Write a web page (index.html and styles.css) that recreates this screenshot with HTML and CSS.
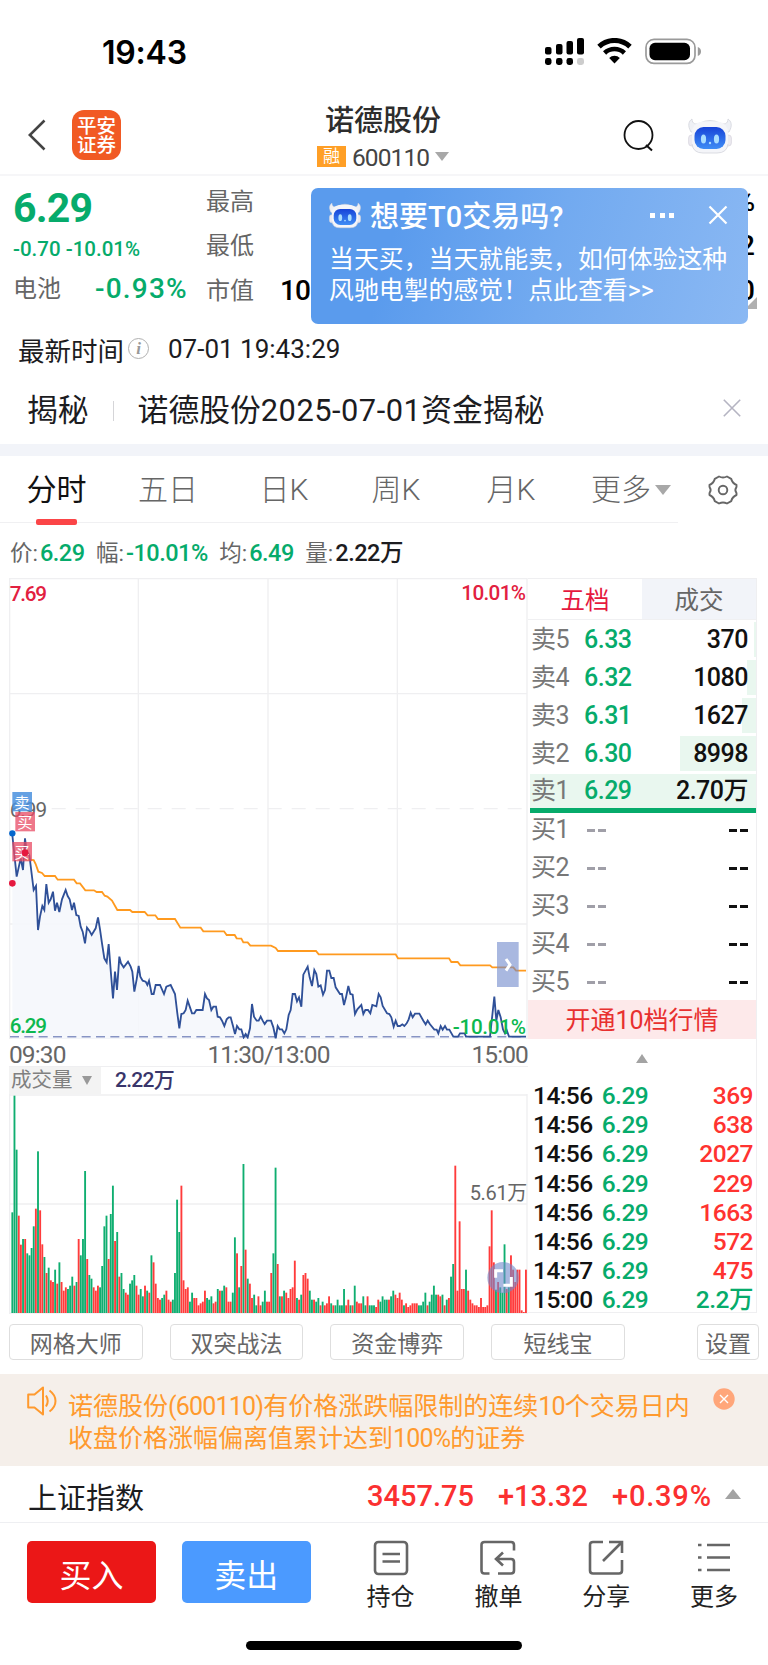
FILE: index.html
```html
<!DOCTYPE html>
<html lang="zh-CN">
<head>
  <meta charset="UTF-8" />
  <meta name="viewport" content="width=device-width, initial-scale=1" />
  <title>诺德股份 600110</title>
  <link rel="stylesheet" href="styles.css">
</head>
<body>
  <svg class="defs" width="0" height="0">
    <defs>
      <linearGradient id="face" x1="0" y1="0" x2="0" y2="1">
        <stop offset="0" stop-color="#1743d8" />
        <stop offset="1" stop-color="#3f8df5" />
      </linearGradient>
      <symbol id="robot" viewBox="0 0 44 36">
        <path d="M3 14 C-1 7 1 3 4 1 C4 6 8 7 12 5 Q22 0 32 5 C36 7 40 6 40 1 C43 3 45 7 41 14Z" fill="#eef0f5" stroke="#d3d4dc" stroke-width=".8" />
        <rect x=".6" y="17" width="7" height="11" rx="3" fill="#eceaf0" stroke="#d5d3dc" stroke-width=".7" />
        <rect x="36.4" y="17" width="7" height="11" rx="3" fill="#eceaf0" stroke="#d5d3dc" stroke-width=".7" />
        <path d="M14 3.500 H30 Q40 5 40 15 V24 Q40 35 29 35 H15 Q4 35 4 24 V15 Q4 5 14 3.500Z" fill="#f4f5f9" />
        <path d="M4 26 Q5 35 15 35 H29 Q39 35 40 26" fill="none" stroke="#d3d4dc" stroke-width=".8" />
        <rect x="6.500" y="9" width="31" height="22" rx="9" fill="url(#face)" />
        <ellipse cx="15.500" cy="21" rx="2.600" ry="4.600" fill="#a8dcff" />
        <ellipse cx="28.500" cy="21" rx="2.600" ry="4.600" fill="#a8dcff" />
        <circle cx="22" cy="25" r="1.200" fill="#a8dcff" />
      </symbol>
    </defs>
  </svg>

  <div class="status-bar">
    <span class="clock">19:43</span>
    <div class="status-icons">
      <svg class="signal" width="39" height="27" viewBox="0 0 39 27">
        <rect x="0" y="9" width="6.5" height="7.5" rx="2" />
        <rect x="11" y="6" width="6.5" height="10.5" rx="2" />
        <rect x="21.5" y="3" width="6.5" height="13.5" rx="2" />
        <rect x="32" y="0" width="7" height="16.5" rx="2" />
        <rect x="0" y="20" width="6.5" height="7" rx="2.4" />
        <rect x="11" y="20" width="6.5" height="7" rx="2.4" />
        <rect x="21.5" y="20" width="6.5" height="7" rx="2.4" />
        <rect x="32" y="20" width="7" height="7" rx="2.4" fill="#ccc" />
      </svg>
      <svg class="wifi" width="35" height="26" viewBox="0 0 35 26">
        <path d="M2 8.6 A22.5 22.5 0 0 1 33 8.6" fill="none" stroke="#000" stroke-width="5" />
        <path d="M7.6 15 A14.4 14.4 0 0 1 27.4 15" fill="none" stroke="#000" stroke-width="4.6" />
        <path d="M17.5 25.4 L12.2 20 A7.6 7.6 0 0 1 22.8 20Z" />
      </svg>
      <svg class="battery" width="57" height="27" viewBox="0 0 57 27">
        <rect x="1" y="1.4" width="49" height="24" rx="8" fill="none" stroke="#9a9a9a" stroke-width="1.7" />
        <rect x="4.5" y="4.8" width="40.5" height="17.4" rx="5.5" />
        <path d="M52.8 9 Q56 10.5 56 13.4 Q56 16.4 52.8 18Z" fill="#9a9a9a" />
      </svg>
    </div>
  </div>

  <header class="header">
    <svg class="back" width="18" height="32" viewBox="0 0 18 32">
      <path d="M16.5 1.5 L1.8 16 L16.5 30.5" fill="none" stroke="#444" stroke-width="2.6" />
    </svg>
    <div class="logo"><span>平安</span><span>证券</span></div>
    <div class="title">
      <div class="stock-name">诺德股份</div>
      <div class="stock-code"><span class="badge">融</span><span class="code">600110</span><i class="tri-down"></i></div>
    </div>
    <svg class="search" width="32" height="34" viewBox="0 0 32 34">
      <circle cx="15.5" cy="16" r="14" fill="none" stroke="#111" stroke-width="1.8" />
      <path d="M23 26 L29 31.5" stroke="#111" stroke-width="2" />
    </svg>
    <svg class="robot" width="44" height="36"><use href="#robot" /></svg>
  </header>

  <section class="quote">
    <div class="quote-left">
      <div class="price">6.29</div>
      <div class="change">-0.70 -10.01%</div>
      <div class="sector"><span>电池</span><b>-0.93%</b></div>
    </div>
    <div class="quote-right">
      <div class="stat"><span>最高</span><em>%</em></div>
      <div class="stat"><span>最低</span><em>2</em></div>
      <div class="stat"><span>市值</span><strong>10</strong><em>0</em></div>
      <i class="corner"></i>
    </div>
    <div class="popup">
      <div class="popup-head">
        <svg width="32" height="27" viewBox="0 0 44 36"><use href="#robot" /></svg>
        <span class="popup-title">想要T0交易吗?</span>
        <i class="dots"></i>
        <svg class="popup-close" width="20" height="20" viewBox="0 0 20 20"><path d="M1.5 1.5 L18.5 18.5 M18.5 1.5 L1.5 18.5" stroke="#fff" stroke-width="2.2" /></svg>
      </div>
      <p>当天买，当天就能卖，如何体验这种<br>风驰电掣的感觉！点此查看&gt;&gt;</p>
    </div>
  </section>

  <div class="latest">
    <span class="latest-label">最新时间</span>
    <i class="info">i</i>
    <span class="latest-time">07-01 19:43:29</span>
  </div>

  <div class="secret">
    <span>揭秘</span>
    <i class="bar"></i>
    <span class="secret-text">诺德股份<span class="date">2025-07-01</span>资金揭秘</span>
    <svg class="secret-close" width="18" height="18" viewBox="0 0 18 18"><path d="M.8 .8 L17.2 17.2 M17.2 .8 L.8 17.2" stroke="#b5b4c2" stroke-width="1.6" /></svg>
  </div>

  <nav class="tabs">
    <span class="tab active">分时</span>
    <span class="tab">五日</span>
    <span class="tab">日K</span>
    <span class="tab">周K</span>
    <span class="tab">月K</span>
    <span class="tab more">更多<i class="tri-down"></i></span>
    <svg class="gear" width="30" height="30" viewBox="0 0 30 30" fill="none" stroke="#666" stroke-width="1.9">
      <path d="M11 1.5 Q15 3.5 19 1.5 L23.2 3.8 Q24.2 8.2 28.5 10 V12 Q26.2 15 28.5 18 V20 Q24.2 21.8 23.2 26.2 L19 28.5 Q15 26.5 11 28.5 L6.8 26.2 Q5.8 21.8 1.5 20 V18 Q3.8 15 1.5 12 V10 Q5.8 8.2 6.8 3.8Z" stroke-linejoin="round" />
      <circle cx="15" cy="15" r="4.3" />
    </svg>
  </nav>

  <div class="summary">
    <span class="s-price">价:<b class="green">6.29</b></span>
    <span class="s-range">幅:<b class="green">-10.01%</b></span>
    <span class="s-avg">均:<b class="green">6.49</b></span>
    <span class="s-vol">量:<b>2.22万</b></span>
  </div>

  <main class="board">
    <div class="charts">
      <svg class="price-chart" width="519" height="461" viewBox="0 0 1557 1383">
        <g stroke="#efeff1" stroke-width="4" fill="none">
          <path d="M2 0 V1383 M388 0 V1383 M777 0 V1383 M1165 0 V1383 M1554 0 V1383 M0 2 H1554 M0 347 H1554 M0 1038 H1554 M0 1381 H1554" />
          <path d="M128 692 H1554" stroke-dasharray="42 30" />
        </g>
        <g transform="translate(-27 606)">
          <path id="area" fill="#f5f7fb" fill-opacity=".85" />
          <polyline id="avg" fill="none" stroke="#ff9a1f" stroke-width="5.5" points="75,238 101,240 107,252 115,275 126,279 134,288 165,288 173,299 222,299 230,310 240,310 256,331 282,331 290,336 306,336 314,347 322,350 336,362 352,390 390,390 397,396 434,396 443,406 466,406 474,417 525,417 541,443 602,443 610,454 672,454 680,465 704,465 710,475 724,476 730,487 743,487 751,497 813,497 827,504 834,513 948,513 956,523 1187,523 1194,535 1347,535 1354,546 1373,546 1381,556 1470,556 1477,562 1540,562 1548,572 1578,572" />
          <path d="M30 770 H1578" stroke="#8794c4" stroke-width="4.5" stroke-dasharray="27 16" />
          <polyline id="line" fill="none" stroke="#2f5098" stroke-width="5.5" points="37,165 50,290 62,235 69,270 75,175 80,215 88,225 101,330 108,318 114,450 120,410 127,378 133,390 139,312 146,368 152,358 159,335 165,392 171,368 178,396 186,358 197,330 203,348 209,358 216,390 222,368 229,405 236,408 242,440 248,455 255,490 261,443 268,452 275,465 287,445 294,412 300,448 306,490 313,535 320,547 326,492 332,570 339,655 345,575 351,630 358,530 363,550 371,562 384,545 392,560 397,575 403,635 410,598 416,558 421,590 428,602 437,605 442,615 447,602 455,642 461,642 467,615 480,615 492,642 499,620 512,615 525,642 532,700 538,745 544,702 551,700 557,690 563,662 570,682 576,700 583,700 589,690 608,690 615,642 621,655 627,660 634,690 640,680 648,680 653,710 660,712 666,722 673,738 680,718 686,712 692,712 699,738 705,762 711,738 718,748 724,748 731,772 737,762 743,772 750,745 756,672 762,710 770,722 776,722 782,710 788,722 794,732 801,722 813,722 820,742 827,775 833,738 839,748 846,748 853,760 859,748 866,705 872,690 878,642 885,642 891,664 897,652 904,680 910,584 923,560 929,592 936,618 943,570 949,582 955,620 962,616 969,644 975,630 981,572 988,572 994,594 1001,594 1007,622 1020,642 1026,642 1032,675 1038,652 1045,618 1051,642 1058,644 1065,702 1072,688 1084,675 1090,702 1096,690 1104,690 1111,700 1117,675 1129,679 1136,642 1142,652 1148,678 1161,700 1168,702 1174,712 1181,740 1187,722 1193,738 1200,738 1207,733 1213,738 1220,730 1226,718 1232,698 1238,712 1245,701 1258,701 1270,722 1277,733 1283,722 1290,733 1303,749 1310,749 1315,760 1322,738 1328,749 1335,738 1341,749 1348,749 1360,770 1374,770 1380,760 1394,760 1398,770 1470,770 1477,705 1483,650 1489,722 1495,690 1502,712 1509,748 1515,760 1520,750 1527,770 1578,770" />
        </g>
        <g class="chart-text">
          <text x="2" y="69" class="up" textLength="112">7.69</text>
          <text x="1551" y="65" class="up" text-anchor="end" textLength="194">10.01%</text>
          <text x="2" y="716" class="flat" textLength="112">6.99</text>
          <text x="2" y="1364" class="down" textLength="112">6.29</text>
          <text x="1551" y="1369" class="down" text-anchor="end" textLength="220">-10.01%</text>
        </g>
        <g class="marks">
          <rect x="10" y="642" width="59" height="58" fill="#4a90de" fill-opacity=".85" />
          <text x="39" y="689">卖</text>
          <rect x="19" y="702" width="59" height="58" fill="#e84a63" fill-opacity=".75" />
          <text x="48" y="749">买</text>
          <rect x="10" y="792" width="59" height="58" fill="#e84a63" fill-opacity=".75" />
          <text x="39" y="839">买</text>
          <circle cx="10" cy="766" r="9.5" fill="#0566cc" />
          <circle cx="48" cy="824" r="10" fill="#e5193f" />
          <circle cx="10" cy="916" r="10" fill="#e5193f" />
        </g>
        <rect x="1464" y="1092" width="65" height="135" fill="#6f88cc" fill-opacity=".6" />
        <path d="M1491 1143 L1503 1160 L1491 1178" fill="none" stroke="#fff" stroke-width="9" />
      </svg>
      <div class="axis"><span>09:30</span><span>11:30/13:00</span><span>15:00</span></div>
      <div class="vol-head">
        <span class="vol-name">成交量<i class="tri-down"></i></span>
        <span class="vol-value">2.22万</span>
      </div>
      <svg class="vol-chart" width="519" height="220" viewBox="0 0 1557 660">
        <path d="M2 0 V660 M1554 0 V660 M0 3 H1554 M0 330 H1554 M0 657 H1554" stroke="#efeff1" stroke-width="4" />
        <g id="bars"></g>
        <text x="1554" y="318" text-anchor="end" class="vol-text">5.61万</text>
        <circle cx="1482" cy="551" r="47" fill="#6f88cc" fill-opacity=".6" />
        <path d="M1460 551 V530 H1482 M1507 549 V574 H1483" fill="none" stroke="#fff" stroke-width="9" />
      </svg>
    </div>

    <aside class="depth">
      <div class="depth-tabs"><span class="on">五档</span><span>成交</span></div>
      <div class="levels sell" id="sell"></div>
      <div class="levels buy" id="buy"></div>
      <div class="open-ten">开通10档行情</div>
      <div class="fold"><i class="tri-up"></i></div>
      <div class="trades" id="trades"></div>
    </aside>
  </main>

  <div class="tools">
    <button>网格大师</button>
    <button>双突战法</button>
    <button>资金博弈</button>
    <button>短线宝</button>
    <button class="setting">设置</button>
  </div>

  <div class="notice">
    <svg class="horn" width="30" height="30" viewBox="0 0 30 30" fill="none" stroke="#ff9a2e" stroke-width="2">
      <path d="M1.2 8.5 H7.5 L16 1.5 V28.5 L7.5 21.5 H1.2Z" stroke-linejoin="round" />
      <path d="M19 9.5 Q22.5 15 19 20.5 M22.5 4.5 Q28.5 9 28.5 15 Q28.5 21 22.5 25.5" />
    </svg>
    <p>诺德股份<span class="num">(600110)</span>有价格涨跌幅限制的连续<span class="num">10</span>个交易日内<br>收盘价格涨幅偏离值累计达到<span class="num">100%</span>的证券</p>
    <svg class="notice-close" width="22" height="22" viewBox="0 0 22 22">
      <circle cx="11" cy="11" r="10.7" fill="#ffa67a" />
      <path d="M7 7 L15 15 M15 7 L7 15" stroke="#fff" stroke-width="1.4" />
    </svg>
  </div>

  <div class="index-row">
    <span class="index-name">上证指数</span>
    <b class="i1">3457.75</b><b class="i2">+13.32</b><b class="i3">+0.39%</b>
    <i class="tri-up"></i>
  </div>

  <footer class="actions">
    <button class="buy-btn">买入</button>
    <button class="sell-btn">卖出</button>
    <div class="action">
      <svg width="36" height="36" viewBox="0 0 36 36"><rect x="2" y="2" width="32" height="32" rx="3.5" /><path d="M9.500 14 H27 M9.500 21.500 H27" /></svg>
      <span>持仓</span>
    </div>
    <div class="action">
      <svg width="36" height="36" viewBox="0 0 36 36"><path d="M9.500 33.500 H4.500 Q1.500 33.500 1.500 30.500 V5 Q1.500 2 4.500 2 H31 Q34 2 34 5 V10.500 M23 12.500 L16 19 L23 25.500 M16 19 H31 Q34 19 34 22 V30.500 Q34 33.500 31 33.500 H18" /></svg>
      <span>撤单</span>
    </div>
    <div class="action">
      <svg width="36" height="36" viewBox="0 0 36 36"><path d="M15 2 H5 Q2 2 2 5 V30.500 Q2 33.500 5 33.500 H31 Q34 33.500 34 30.500 V20 M21 2 H34 V13 M34 2 L15 21" /></svg>
      <span>分享</span>
    </div>
    <div class="action">
      <svg width="36" height="36" viewBox="0 0 36 36"><path d="M11 5 H34 M11 17.500 H34 M11 30 H34 M2 5 H5.500 M2 17.500 H5.500 M2 30 H5.500" /></svg>
      <span>更多</span>
    </div>
  </footer>
  <div class="home-bar"></div>

  <script src="script.js"></script>
</body>
</html>
```
FILE: styles.css
```css
body {
  margin: 0;
  width: 768px;
  background: #fff;
  color: #1c1c1f;
  font-family: Roboto, "Noto Sans CJK SC", sans-serif;
  overflow-x: hidden;
}

.defs {
  position: absolute;
}

svg {
  display: block;
  flex: none;
}

i, em {
  font-style: normal;
}

b {
  font-weight: 500;
}

button {
  font-family: inherit;
  padding: 0;
}

.green {
  color: #06ab6b;
}

.tri-down {
  border: 7px solid transparent;
  border-top: 9px solid #a8a8a8;
  border-bottom: 0;
}

.tri-up {
  border: 8px solid transparent;
  border-bottom: 10px solid #a3a3a3;
  border-top: 0;
}

/* status bar */
.status-bar {
  height: 100px;
  padding: 0 66px 0 102px;
  display: flex;
  justify-content: space-between;
}

.clock {
  font: 600 32px/40px Inter, sans-serif;
  color: #000;
  margin-top: 33px;
  letter-spacing: -0.2px;
}

.status-icons {
  display: flex;
  margin-top: 38px;
}

.wifi {
  margin: 0 13px;
}

/* header */
.header {
  height: 76px;
  border-bottom: 2px solid #f6f6f8;
  display: flex;
  box-sizing: border-box;
  padding: 0 36px 0 28px;
}

.back {
  margin-top: 19px;
}

.logo {
  width: 50px;
  height: 43px;
  padding: 7px 0 0;
  margin: 10px 0 0 26px;
  border-radius: 12px;
  background: #f15a24;
  color: #fff;
  font-size: 19.5px;
  line-height: 19px;
  font-weight: 500;
  text-align: center;
}

.logo span {
  display: block;
}

.title {
  margin-left: 196px;
  width: 132px;
}

.stock-name {
  font-size: 29px;
  line-height: 42px;
  font-weight: 500;
  color: #2d2d2d;
  text-align: center;
  white-space: nowrap;
}

.stock-code {
  display: flex;
  align-items: center;
  height: 28px;
}

.badge {
  width: 29px;
  height: 21px;
  flex: none;
  background: #ff9f26;
  color: #fff;
  font-size: 17px;
  line-height: 20px;
  text-align: center;
}

.code {
  color: #444;
  font-size: 24.5px;
  letter-spacing: -0.9px;
  margin: 2px 6px 0;
}

.search {
  margin: 19px 0 0 174px;
}

.robot {
  margin: 18px 0 0 33px;
}

/* quote */
.quote {
  position: relative;
  height: 147px;
  display: flex;
}

.quote-left {
  width: 206px;
  padding-left: 13px;
  box-sizing: border-box;
}

.price {
  font-size: 41px;
  line-height: 48px;
  font-weight: 700;
  color: #06ab6b;
  margin-top: 8px;
  letter-spacing: -0.8px;
}

.change {
  font-size: 20.5px;
  line-height: 26px;
  font-weight: 500;
  color: #06ab6b;
  margin-top: 4px;
  letter-spacing: 0;
}

.sector {
  display: flex;
  align-items: center;
  height: 40px;
  margin-top: 7px;
  font-size: 24px;
  line-height: 40px;
  color: #666;
}

.sector b {
  margin-left: 34px;
  font-size: 28px;
  color: #06ab6b;
  letter-spacing: 1.2px;
}

.quote-right {
  position: relative;
  width: 549px;
  padding-top: 6px;
}

.stat {
  height: 44.3px;
  line-height: 40px;
  display: flex;
  font-size: 24px;
  color: #666;
}

.stat strong {
  font-size: 28px;
  font-weight: 500;
  color: #000;
  margin-left: 26px;
  letter-spacing: -1px;
}

.stat em {
  font-size: 28px;
  font-weight: 500;
  color: #000;
  margin-left: auto;
}

.corner {
  position: absolute;
  right: -2px;
  bottom: 14px;
  border: 6px solid #b0b0b0;
  border-top-color: transparent;
  border-left-color: transparent;
}

.popup {
  position: absolute;
  left: 311px;
  top: 12px;
  width: 437px;
  height: 136px;
  box-sizing: border-box;
  padding: 6px 20px 0 18px;
  border-radius: 7px;
  background: linear-gradient(105deg, #5a9bed 20%, #72aaf0 55%, #8ab8f3);
  color: #fff;
}

.popup-head {
  display: flex;
  align-items: center;
  height: 42px;
}

.popup-title {
  font-size: 29px;
  font-weight: 500;
  line-height: 44px;
  margin: 3px 0 0 9px;
  width: 282px;
  white-space: nowrap;
}

.dots {
  width: 5px;
  height: 5px;
  background: #fff;
  box-shadow: 10px 0 #fff, 19px 0 #fff;
  margin-right: 53px;
}

.popup p {
  margin: 8px 0 0;
  font-size: 24.9px;
  line-height: 31px;
  white-space: nowrap;
}

/* latest time */
.latest {
  height: 52px;
  display: flex;
  align-items: center;
  padding-left: 18px;
  font-size: 26.5px;
}

.info {
  width: 19px;
  height: 19px;
  border: 1.5px solid #b0b0b0;
  border-radius: 50%;
  margin: 0 0 2px 4px;
  color: #999;
  font: italic bold 17px/19px "Liberation Serif", serif;
  text-align: center;
}

.latest-time {
  margin-left: 19px;
  font-size: 26px;
}

.secret {
  height: 65px;
  padding-bottom: 4px;
  border-bottom: 12px solid #f2f4f9;
  display: flex;
  align-items: center;
  padding: 0 27px 4px;
  font-size: 30.8px;
  white-space: nowrap;
}

.bar {
  width: 1px;
  height: 20px;
  background: #d5d5d8;
  margin: 6px 24px 0 24px;
}

.date {
  letter-spacing: 0.5px;
}

.secret-close {
  margin-left: auto;
}

/* tabs */
.tabs {
  height: 67px;
  display: grid;
  grid-template-columns: 113px 110px 122px 102px 128px 133px 30px;
  align-items: center;
  font-size: 30px;
  color: #666;
  font-weight: 300;
  background: linear-gradient(#f0f0f2, #f0f0f2) left bottom / 678px 1px no-repeat;
}

.tab {
  text-align: center;
  line-height: 60px;
}

.tab.active {
  color: #111;
  font-weight: 400;
  position: relative;
}

.tab.active::after {
  content: "";
  position: absolute;
  left: 36px;
  bottom: -5px;
  width: 41px;
  height: 6px;
  border-radius: 2px;
  background: #fb4547;
}

.more {
  display: flex;
  align-items: center;
  padding-left: 16px;
}

.more .tri-down {
  border-width: 10px 8px 0;
  margin-left: 4px;
}

/* summary */
.summary {
  height: 55px;
  line-height: 60px;
  padding-left: 10px;
  font-size: 22.5px;
  color: #666;
  display: flex;
}

.summary b {
  font-size: 23.5px;
  letter-spacing: -0.5px;
  margin-left: 2px;
}

.summary b:not(.green) {
  color: #1c1c1f;
}

.summary span {
  margin-right: 11.5px;
}

/* charts and depth */
.board {
  display: flex;
  height: 735px;
  padding-left: 9px;
}

.charts {
  width: 519px;
}

.chart-text {
  font-size: 62px;
  font-weight: 500;
}

.up {
  fill: #e22040;
}

.down {
  fill: #0cb84f;
}

.flat {
  fill: #666;
  font-weight: 400;
}

.marks text {
  font-size: 46px;
  text-anchor: middle;
  fill: #fff;
}

.axis {
  display: flex;
  justify-content: space-between;
  height: 27px;
  line-height: 32px;
  font-size: 24.5px;
  letter-spacing: -0.9px;
  color: #666;
  border-bottom: 1px solid #efeff1;
}

.vol-head {
  display: flex;
  height: 27px;
  line-height: 27px;
}

.vol-name {
  display: flex;
  align-items: center;
  width: 92px;
  background: #f3f3f3;
  color: #808080;
  font-size: 20.5px;
  text-indent: 2px;
}

.vol-name .tri-down {
  border-width: 9px 5.5px 0;
  border-top-color: #999;
  margin-left: 9px;
}

.vol-value {
  margin-left: 14px;
  font-size: 21px;
  font-weight: 500;
  letter-spacing: -0.7px;
  color: #39356a;
}

.vol-text {
  font-size: 60px;
  letter-spacing: -1px;
  fill: #666;
}

.depth {
  width: 229px;
  box-sizing: border-box;
  border: solid #efeff1;
  border-width: 1px 1px 1px 0;
}

.depth-tabs {
  display: flex;
  height: 40px;
  line-height: 44px;
  font-size: 24.5px;
  text-align: center;
  border-bottom: 1px solid #f0f0f2;
  color: #666;
}

.depth-tabs span {
  flex: 1;
  background: #f2f4f9;
}

.depth-tabs .on {
  color: #e5193f;
  background: #fff;
}

.sell {
  border-bottom: 5px solid #06ab6b;
  margin-left: 2px;
  padding-top: 1px;
}

.buy {
  margin-left: 2px;
  height: 187px;
}

.level {
  display: flex;
  align-items: center;
  height: 38px;
  line-height: 38px;
  font-size: 25px;
  letter-spacing: -0.5px;
  color: #777;
  padding: 0 8px 0 1px;
  background: linear-gradient(#e9f7ef, #e9f7ef) right 0 top 1px no-repeat;
}

.sell .level:last-child {
  height: 35px;
}

.level .name {
  width: 53px;
  white-space: nowrap;
}

.buy .name {
  margin-top: -4px;
}

.level .lp {
  color: #06ab6b;
  font-weight: 500;
}

.level .amt {
  margin-left: auto;
  color: #111;
  font-weight: 500;
}

.level .dash {
  width: 8px;
  height: 3px;
  background: #111;
  margin: -4px 0 0 3px;
}

.level .dash.grey {
  background: #a09fa8;
}

.level .dash.push {
  margin-left: auto;
}

.open-ten {
  height: 39px;
  line-height: 42px;
  background: #fde9ea;
  color: #e8302f;
  font-size: 25px;
  text-align: center;
}

.fold {
  height: 42px;
  display: flex;
  justify-content: center;
  align-items: center;
}

.fold .tri-up {
  border-width: 0 6px 9px;
  margin-top: -3px;
}

.trade {
  display: flex;
  height: 29.2px;
  line-height: 30px;
  font-size: 24.5px;
  letter-spacing: -0.5px;
  font-weight: 500;
  color: #111;
  padding: 0 3px 0 5px;
}

.trade .lp {
  color: #06ab6b;
  margin-left: 9px;
}

.trade .amt {
  margin-left: auto;
  color: #ff3330;
}

.trade .amt.green {
  color: #06ab6b;
}

/* tool buttons */
.tools {
  display: flex;
  padding: 11px 9px 14px;
  gap: 27px;
}

.tools button {
  width: 133.7px;
  height: 36px;
  border: 1.5px solid #dedede;
  border-radius: 4px;
  background: #fff;
  font-size: 23px;
  line-height: 34px;
  padding-top: 3px;
  color: #666;
}

.tools .setting {
  width: 62px;
  margin-left: auto;
}

/* notice */
.notice {
  height: 92px;
  background: #f5efea;
  display: flex;
  padding: 0 33px 0 27px;
  color: #ff9a2e;
}

.horn {
  margin-top: 12px;
}

.notice p {
  margin: 17px 0 0 11px;
  font-size: 25px;
  line-height: 32px;
  white-space: nowrap;
}

.num {
  letter-spacing: -0.8px;
}

.notice-close {
  margin: 14px 0 0 auto;
}

/* index */
.index-row {
  height: 53px;
  padding: 3px 27px 0 28px;
  border-bottom: 1px solid #eeeff2;
  display: flex;
  align-items: center;
  font-size: 29px;
}

.index-name {
  width: 339px;
}

.index-row b {
  color: #fb3030;
  white-space: nowrap;
}

.i2 {
  margin-left: 24px;
}

.i3 {
  margin-left: 24px;
  letter-spacing: 0.8px;
}

.index-row .tri-up {
  margin: 0 0 3px auto;
}

/* bottom actions */
.actions {
  display: flex;
  height: 118px;
  padding: 18px 0 0 27px;
  box-sizing: border-box;
}

.actions button {
  width: 129px;
  height: 62px;
  border: 0;
  border-radius: 5px;
  color: #fff;
  font-size: 32px;
  padding-top: 2px;
  background: #eb1717;
  margin-right: 26px;
}

.actions .sell-btn {
  background: #4b9aff;
}

.action {
  width: 108px;
  text-align: center;
  font-size: 24px;
  color: #222;
}

.action svg {
  margin: -1px auto 5px;
  fill: none;
  stroke: #666;
  stroke-width: 2.6;
}

.action span {
  display: block;
  line-height: 32px;
}

.home-bar {
  width: 276px;
  height: 9px;
  border-radius: 5px;
  background: #000;
  margin: 0 auto 15px;
}
```
FILE: script.js
```js
// price area follows the line down to the baseline
const pts = document.getElementById("line").getAttribute("points");
document.getElementById("area").setAttribute("d", `M37,770 L${pts} L1578,776 L37,776Z`);

// volume per minute, g = down, r = up
const volumes = `g302 g652 g490 r292 r205 g222 r222 g179 g173 g195 g260 r313 g485 r308 r206 g168 r120 g136 r98 r93
g130 r88 g152 r93 r67 r77 g72 g82 g109 r82 g93 r222 g173 g222 g426 r162 g114 g103 r77 r67
r82 g77 g141 g260 g292 r162 g297 g382 r216 g243 r109 g120 g72 r61 r55 g88 g98 g114 r82 r55
g72 g50 r82 g67 r61 g173 r152 r88 r45 r40 g45 g55 r67 r40 r34 g40 g120 g340 g243 r382
r98 r72 r77 g34 g61 r45 r45 r23 r29 r34 r67 g45 g40 g50 r29 r34 g72 r67 g67 g82
r77 r34 r34 g61 g227 r179 g77 r141 g447 r190 g103 r88 r45 g55 g23 r50 r23 g34 g67 r34
r34 r120 g179 g436 r147 g50 r50 g67 r61 r45 r72 r77 r157 g45 r40 g55 r114 r120 r103 g67
g40 r40 g34 g45 r23 g34 r23 r29 r50 g29 r23 g23 g40 g23 g23 g72 r23 r40 g23 r23
g82 r34 r29 r29 g50 g23 r50 g23 g23 g23 r18 r40 g34 g50 g40 g40 r40 g50 g67 r55
r45 r61 r40 g23 r29 r18 r23 r29 r29 r29 g23 g23 g34 g61 r23 g34 g55 g82 g55 r55
r50 g55 r23 g40 r45 g109 g147 r442 r67 r275 r72 r72 g130 r67 r40 r29 r23 r23 r18 r45
r18 r18 r23 r200 r308 r152 g70 r93 g77 g61 g206 r72 g77 r173 r130 r93 r130 r130 r8 r3 r130`.split(/\s+/);

document.getElementById("bars").innerHTML = volumes.map((v, i) => {
  const h = Number(v.slice(1));
  const fill = v[0] === "g" ? "#0fae70" : "#ff3b3b";
  return `<rect x="${(7.2 + i * 6.42).toFixed(1)}" y="${657 - h}" width="5.6" height="${h}" fill="${fill}"/>`;
}).join("");

const sells = [
  ["卖5", "6.33", "370", 2],
  ["卖4", "6.32", "1080", 9],
  ["卖3", "6.31", "1627", 14],
  ["卖2", "6.30", "8998", 76],
  ["卖1", "6.29", "2.70万", 226]
];
document.getElementById("sell").innerHTML = sells.map(([name, price, amount, w]) => `
  <div class="level" style="background-size: ${w}px 35px">
    <span class="name">${name}</span><span class="lp">${price}</span><span class="amt">${amount}</span>
  </div>`).join("");

document.getElementById("buy").innerHTML = [1, 2, 3, 4, 5].map(n => `
  <div class="level" style="background-size: 0 0">
    <span class="name">买${n}</span><i class="dash grey"></i><i class="dash grey"></i>
    <i class="dash push"></i><i class="dash"></i>
  </div>`).join("");

const trades = [
  ["14:56", "369"], ["14:56", "638"], ["14:56", "2027"], ["14:56", "229"],
  ["14:56", "1663"], ["14:56", "572"], ["14:57", "475"], ["15:00", "2.2万"]
];
document.getElementById("trades").innerHTML = trades.map(([time, amount]) => `
  <div class="trade"><span>${time}</span><span class="lp">6.29</span><span class="amt${amount === "2.2万" ? " green" : ""}">${amount}</span></div>`).join("");
```
